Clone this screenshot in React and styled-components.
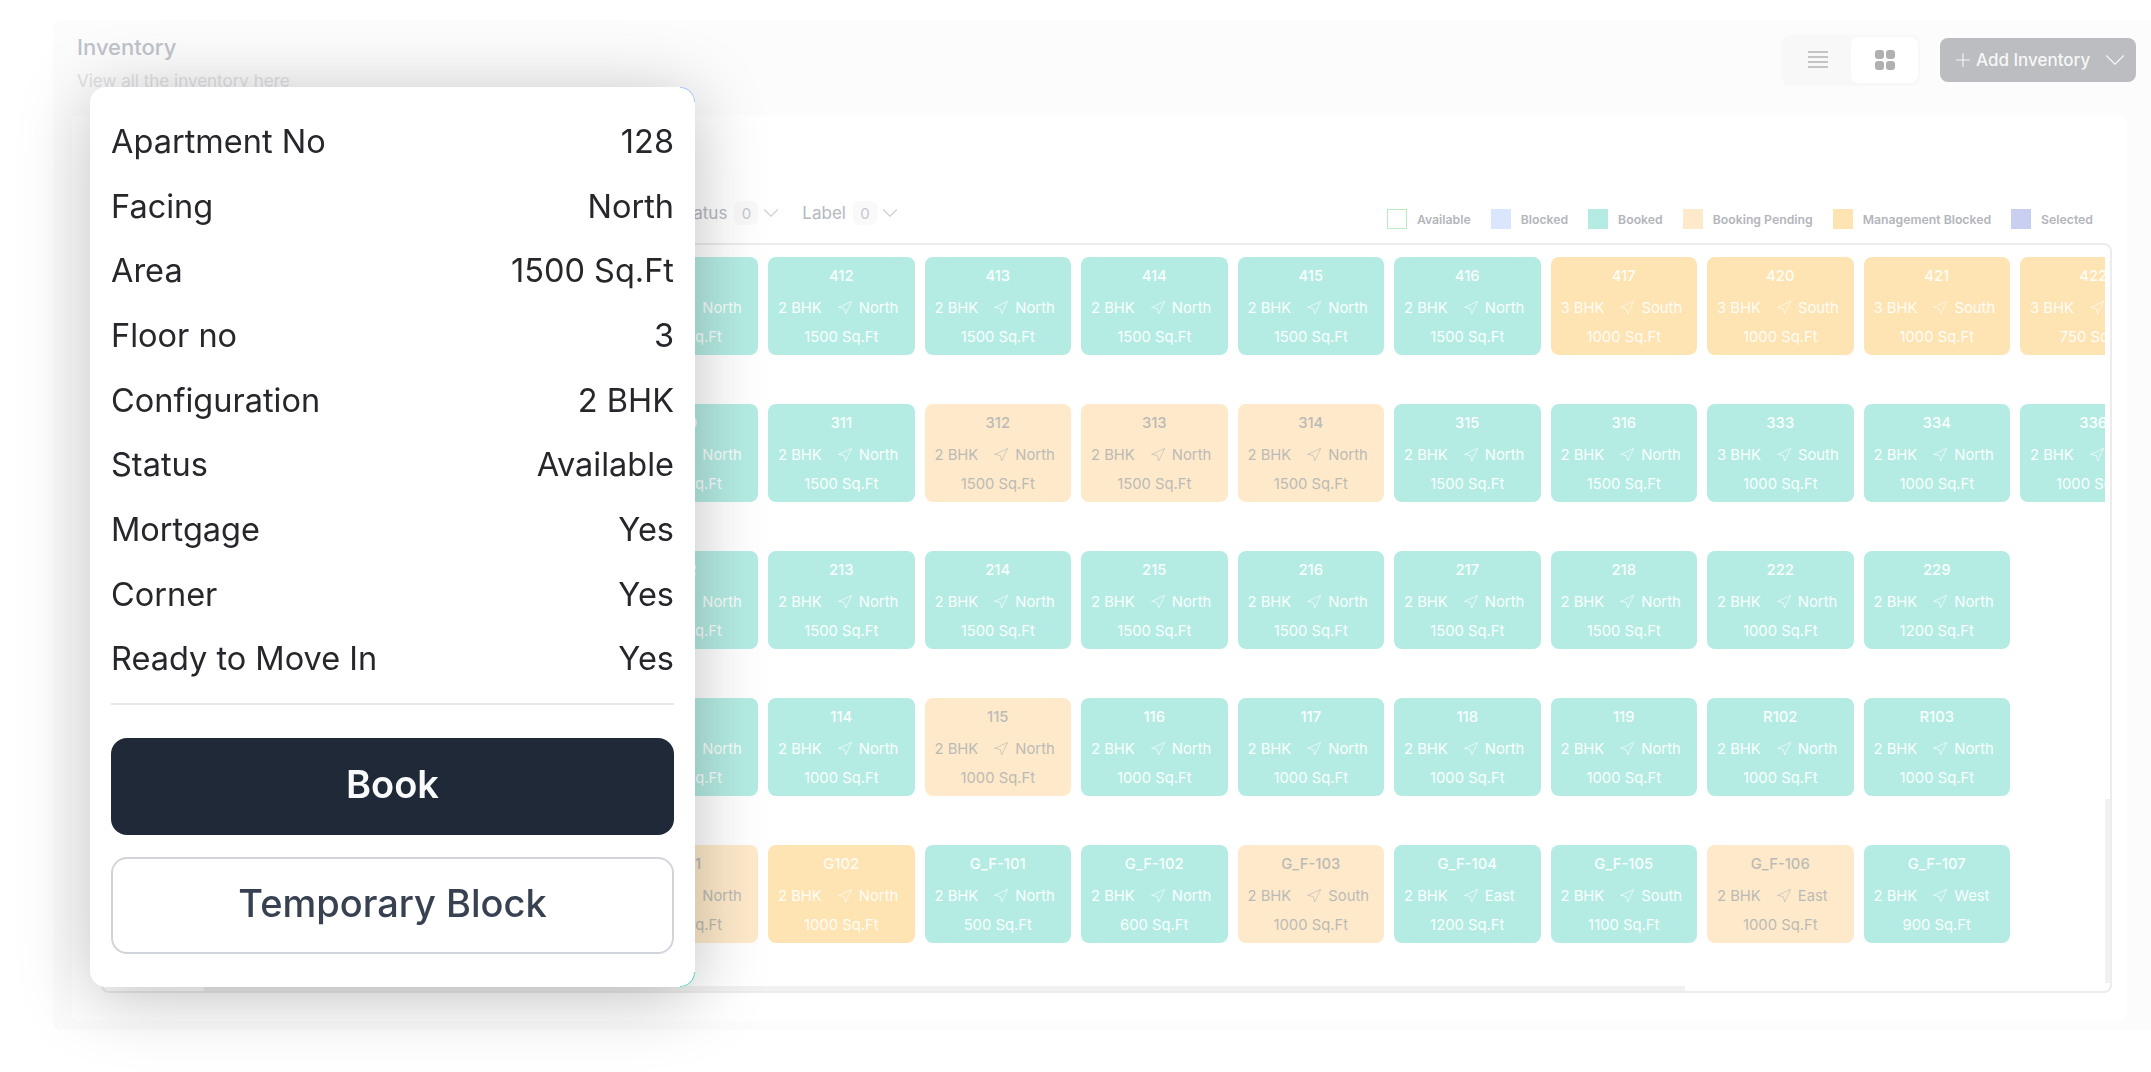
import styled, { createGlobalStyle } from 'styled-components'
import { ChevronDown, Navigation, Plus } from 'lucide-react'

const B = 'booked'
const M = 'management'
const P = 'pending'

const tile = (no, status, area, bhk = '2 BHK', facing = 'North') => ({ no, status, area, bhk, facing })

const rows = [
  [
    tile('408', B, 1500), tile('409', B, 1500), tile('410', B, 1500), tile('411', B, 1500),
    tile('412', B, 1500), tile('413', B, 1500), tile('414', B, 1500), tile('415', B, 1500), tile('416', B, 1500),
    tile('417', M, 1000, '3 BHK', 'South'), tile('420', M, 1000, '3 BHK', 'South'), tile('421', M, 1000, '3 BHK', 'South'),
    tile('422', M, 750, '3 BHK', 'South'),
  ],
  [
    tile('307', B, 1500), tile('308', B, 1500), tile('309', B, 1500), tile('310', B, 1500),
    tile('311', B, 1500), tile('312', P, 1500), tile('313', P, 1500), tile('314', P, 1500), tile('315', B, 1500), tile('316', B, 1500),
    tile('333', B, 1000, '3 BHK', 'South'), tile('334', B, 1000), tile('336', B, 1000),
  ],
  [
    tile('209', B, 1500), tile('210', B, 1500), tile('211', B, 1500), tile('212', B, 1500),
    tile('213', B, 1500), tile('214', B, 1500), tile('215', B, 1500), tile('216', B, 1500), tile('217', B, 1500), tile('218', B, 1500),
    tile('222', B, 1000), tile('229', B, 1200),
  ],
  [
    tile('110', B, 1000), tile('111', B, 1000), tile('112', B, 1000), tile('113', B, 1000),
    tile('114', B, 1000), tile('115', P, 1000), tile('116', B, 1000), tile('117', B, 1000), tile('118', B, 1000), tile('119', B, 1000),
    tile('R102', B, 1000), tile('R103', B, 1000),
  ],
  [
    tile('G98', P, 1000), tile('G99', P, 1000), tile('G100', P, 1000), tile('G101', P, 1000),
    tile('G102', M, 1000), tile('G_F-101', B, 500), tile('G_F-102', B, 600), tile('G_F-103', P, 1000, '2 BHK', 'South'),
    tile('G_F-104', B, 1200, '2 BHK', 'East'), tile('G_F-105', B, 1100, '2 BHK', 'South'), tile('G_F-106', P, 1000, '2 BHK', 'East'),
    tile('G_F-107', B, 900, '2 BHK', 'West'),
  ],
]

const legend = [
  { label: 'Available', kind: 'available' },
  { label: 'Blocked', kind: 'blocked' },
  { label: 'Booked', kind: 'booked' },
  { label: 'Booking Pending', kind: 'pending' },
  { label: 'Management Blocked', kind: 'management' },
  { label: 'Selected', kind: 'selected' },
]

const details = [
  ['Apartment No', '128'],
  ['Facing', 'North'],
  ['Area', '1500 Sq.Ft'],
  ['Floor no', '3'],
  ['Configuration', '2 BHK'],
  ['Status', 'Available'],
  ['Mortgage', 'Yes'],
  ['Corner', 'Yes'],
  ['Ready to Move In', 'Yes'],
]

const filters = ['Tower', 'Floor', 'Facing', 'Type', 'Status', 'Label']

const App = () => {
  return (
    <Page>
      <GlobalStyle />
      <Shell>
        <Header>
          <Heading>
            <Title>Inventory</Title>
            <Subtitle>View all the inventory here</Subtitle>
          </Heading>
          <Actions>
            <ViewToggle>
              <ViewButton>
                <svg width="20" height="18" viewBox="0 0 20 18" fill="none" stroke="#c4c4c4" strokeWidth="2">
                  <path d="M0 1h20M0 6h20M0 11h20M0 16h20" />
                </svg>
              </ViewButton>
              <ViewButton $active>
                <svg width="20" height="20" viewBox="0 0 20 20" fill="#b0b0b0">
                  <rect x="0" y="0" width="9" height="9" rx="3" />
                  <rect x="11" y="0" width="9" height="9" rx="3" />
                  <rect x="0" y="11" width="9" height="9" rx="3" />
                  <rect x="11" y="11" width="9" height="9" rx="3" />
                </svg>
              </ViewButton>
            </ViewToggle>
            <AddButton>
              <Plus size={22} strokeWidth={1.2} />
              <AddLabel>Add Inventory</AddLabel>
              <ChevronDown size={34} strokeWidth={0.8} />
            </AddButton>
          </Actions>
        </Header>
        <Panel>
          <Toolbar>
            <Filters>
              {filters.map((name) => (
                <Filter key={name}>
                  <span>{name}</span>
                  <Count>0</Count>
                  <FilterCaret size={26} strokeWidth={1} />
                </Filter>
              ))}
            </Filters>
            <Legend>
              {legend.map((item) => (
                <LegendItem key={item.label}>
                  <Swatch $kind={item.kind} />
                  <span>{item.label}</span>
                </LegendItem>
              ))}
            </Legend>
          </Toolbar>
          <Board>
            <Floors>
              {rows.map((row, index) => (
                <Floor key={index}>
                  {row.map((t) => (
                    <Tile key={t.no} $status={t.status}>
                      <TileNo>{t.no}</TileNo>
                      <TileInfo>
                        <span>{t.bhk}</span>
                        <FacingIcon size={16} strokeWidth={1} />
                        <span>{t.facing}</span>
                      </TileInfo>
                      <span>{t.area} Sq.Ft</span>
                    </Tile>
                  ))}
                </Floor>
              ))}
            </Floors>
            <ScrollY />
            <ScrollX />
          </Board>
        </Panel>
      </Shell>
      <Popup>
        <DetailList>
          {details.map(([label, value]) => (
            <DetailRow key={label}>
              <span>{label}</span>
              <span>{value}</span>
            </DetailRow>
          ))}
        </DetailList>
        <Divider />
        <BookButton>Book</BookButton>
        <BlockButton>Temporary Block</BlockButton>
      </Popup>
    </Page>
  )
}

const GlobalStyle = createGlobalStyle`
  html, body {
    margin: 0;
    background: #fff;
    overflow: hidden;
  }
  * {
    box-sizing: border-box;
  }
  body {
    font-family: Inter, "Liberation Sans", sans-serif;
  }
`

const swatchColors = {
  available: '#fff',
  blocked: '#d9e6fd',
  booked: '#b4ece3',
  pending: '#feeaca',
  management: '#fee3b3',
  selected: '#c8cff0',
}

const Page = styled.div`
  position: relative;
  width: 2151px;
  height: 1072px;
  padding: 20px 0 0 53px;
  filter: blur(0.4px);
`

const Shell = styled.div`
  height: 1010px;
  background: #fcfcfc;
  border-radius: 8px 0 0 8px;
`

const Header = styled.div`
  height: 95px;
  display: flex;
  justify-content: space-between;
  padding: 15px 15px 0 24px;
`

const Heading = styled.div`
  display: flex;
  flex-direction: column;
  gap: 11px;
`

const Title = styled.div`
  font-size: 22px;
  line-height: 24px;
  font-weight: 500;
  color: #bfc3ca;
`

const Subtitle = styled.div`
  font-size: 17px;
  line-height: 22px;
  color: #e0e1e4;
`

const Actions = styled.div`
  display: flex;
  align-items: flex-start;
  gap: 20px;
`

const ViewToggle = styled.div`
  width: 138px;
  height: 51px;
  display: flex;
  justify-content: flex-end;
  padding: 2px;
  background: #f8f8f8;
  border-radius: 8px;
`

const ViewButton = styled.div`
  width: 67px;
  height: 46px;
  display: flex;
  align-items: center;
  justify-content: center;
  border-radius: 8px;
  background: ${(p) => (p.$active ? '#fff' : 'transparent')};
`

const AddButton = styled.div`
  width: 196px;
  height: 44px;
  margin-top: 3px;
  display: flex;
  align-items: center;
  padding: 0 4px 0 12px;
  background: #bbbdc1;
  border-radius: 8px;
  color: #f7f7f7;
`

const AddLabel = styled.span`
  flex: 1;
  margin-left: 2px;
  font-size: 17px;
  font-weight: 500;
  white-space: nowrap;
`

const Panel = styled.div`
  height: 906px;
  margin: 0 24px 0 19px;
  padding: 0 15px 28px 29px;
  display: flex;
  flex-direction: column;
  background: #fff;
  border-radius: 8px;
`

const Toolbar = styled.div`
  height: 128px;
  flex: none;
  display: flex;
  align-items: flex-end;
  justify-content: space-between;
  padding: 0 19px 14px 0;
`

const Filters = styled.div`
  display: flex;
  gap: 18px;
  padding: 0 0 3px 92px;
`

const Filter = styled.div`
  display: flex;
  align-items: center;
  gap: 7px;
  font-size: 17px;
  color: #b5b8c0;
`

const Count = styled.span`
  width: 24px;
  height: 24px;
  display: flex;
  align-items: center;
  justify-content: center;
  background: #f9f9f9;
  border-radius: 6px;
  font-size: 15px;
  color: #c4c8d0;
`

const FilterCaret = styled(ChevronDown)`
  margin-left: -7px;
  color: #cfcfcf;
`

const Legend = styled.div`
  display: flex;
  gap: 20px;
`

const LegendItem = styled.div`
  display: flex;
  align-items: center;
  gap: 10px;
  font-size: 12.25px;
  font-weight: 600;
  color: #b3b5bb;
`

const Swatch = styled.span`
  width: 20px;
  height: 20px;
  background: ${(p) => swatchColors[p.$kind]};
  border: ${(p) => (p.$kind === 'available' ? '1.5px solid #b8ecc0' : 'none')};
`

const Board = styled.div`
  position: relative;
  flex: 1;
  padding-right: 5px;
  border: 2px solid #ececec;
  border-radius: 8px;
  overflow: hidden;
`

const Floors = styled.div`
  height: 100%;
  display: flex;
  flex-direction: column;
  gap: 49px;
  padding: 12px 0 0 39px;
  overflow: hidden;
`

const Floor = styled.div`
  display: flex;
  gap: 10px;
`

const tileStyles = {
  booked: 'background: #b4ece3; color: #fafffe;',
  management: 'background: #fee3b3; color: #fffdf6;',
  pending: 'background: #feeaca; color: #bcbab6;',
}

const Tile = styled.div`
  flex: 0 0 146.5px;
  height: 98px;
  display: flex;
  flex-direction: column;
  align-items: center;
  padding-top: 9px;
  border-radius: 8px;
  font-size: 14.8px;
  line-height: 20px;
  white-space: nowrap;
  ${(p) => tileStyles[p.$status]}
`

const TileNo = styled.span`
  font-weight: 500;
`

const TileInfo = styled.div`
  align-self: stretch;
  display: flex;
  align-items: center;
  height: 20px;
  margin: 12px 0 9px;
  padding-left: 10px;
`

const FacingIcon = styled(Navigation)`
  flex: none;
  margin: 0 6px 0 15px;
`

const ScrollY = styled.div`
  position: absolute;
  top: 554px;
  right: 0;
  width: 5px;
  height: 184px;
  background: #f1f1f1;
`

const ScrollX = styled.div`
  position: absolute;
  left: 101px;
  bottom: 0;
  width: 1481px;
  height: 5px;
  background: #f1f1f1;
`

const Popup = styled.div`
  position: absolute;
  left: 90px;
  top: 87px;
  width: 605px;
  height: 900px;
  padding: 22px 21px 0;
  background: #fff;
  border-radius: 16px;
  box-shadow: 0 10px 70px rgba(0, 0, 0, 0.25);

  &::before,
  &::after {
    content: '';
    position: absolute;
    right: 0;
    width: 14px;
    height: 14px;
  }
  &::before {
    top: 0;
    border-top: 1px solid #a9c4fb;
    border-right: 1px solid #a9c4fb;
    border-top-right-radius: 16px;
  }
  &::after {
    bottom: 0;
    border-bottom: 1px solid #5fd6c2;
    border-right: 1px solid #5fd6c2;
    border-bottom-right-radius: 16px;
  }
`

const DetailList = styled.div`
  display: flex;
  flex-direction: column;
`

const DetailRow = styled.div`
  height: 64.7px;
  display: flex;
  align-items: center;
  justify-content: space-between;
  font-size: 32.5px;
  color: #25272b;
`

const Divider = styled.div`
  height: 2px;
  margin: 11.7px 0 33px;
  background: #e5e7eb;
`

const BookButton = styled.div`
  height: 97px;
  display: flex;
  align-items: center;
  justify-content: center;
  margin-bottom: 22px;
  padding-bottom: 4px;
  background: #1f2937;
  border-radius: 16px;
  font-size: 38px;
  font-weight: 600;
  color: #f9fafb;
`

const BlockButton = styled.div`
  height: 97px;
  display: flex;
  align-items: center;
  justify-content: center;
  padding-bottom: 4px;
  border: 2px solid #d1d5db;
  border-radius: 16px;
  font-size: 38px;
  font-weight: 500;
  color: #374151;
`

export default App
